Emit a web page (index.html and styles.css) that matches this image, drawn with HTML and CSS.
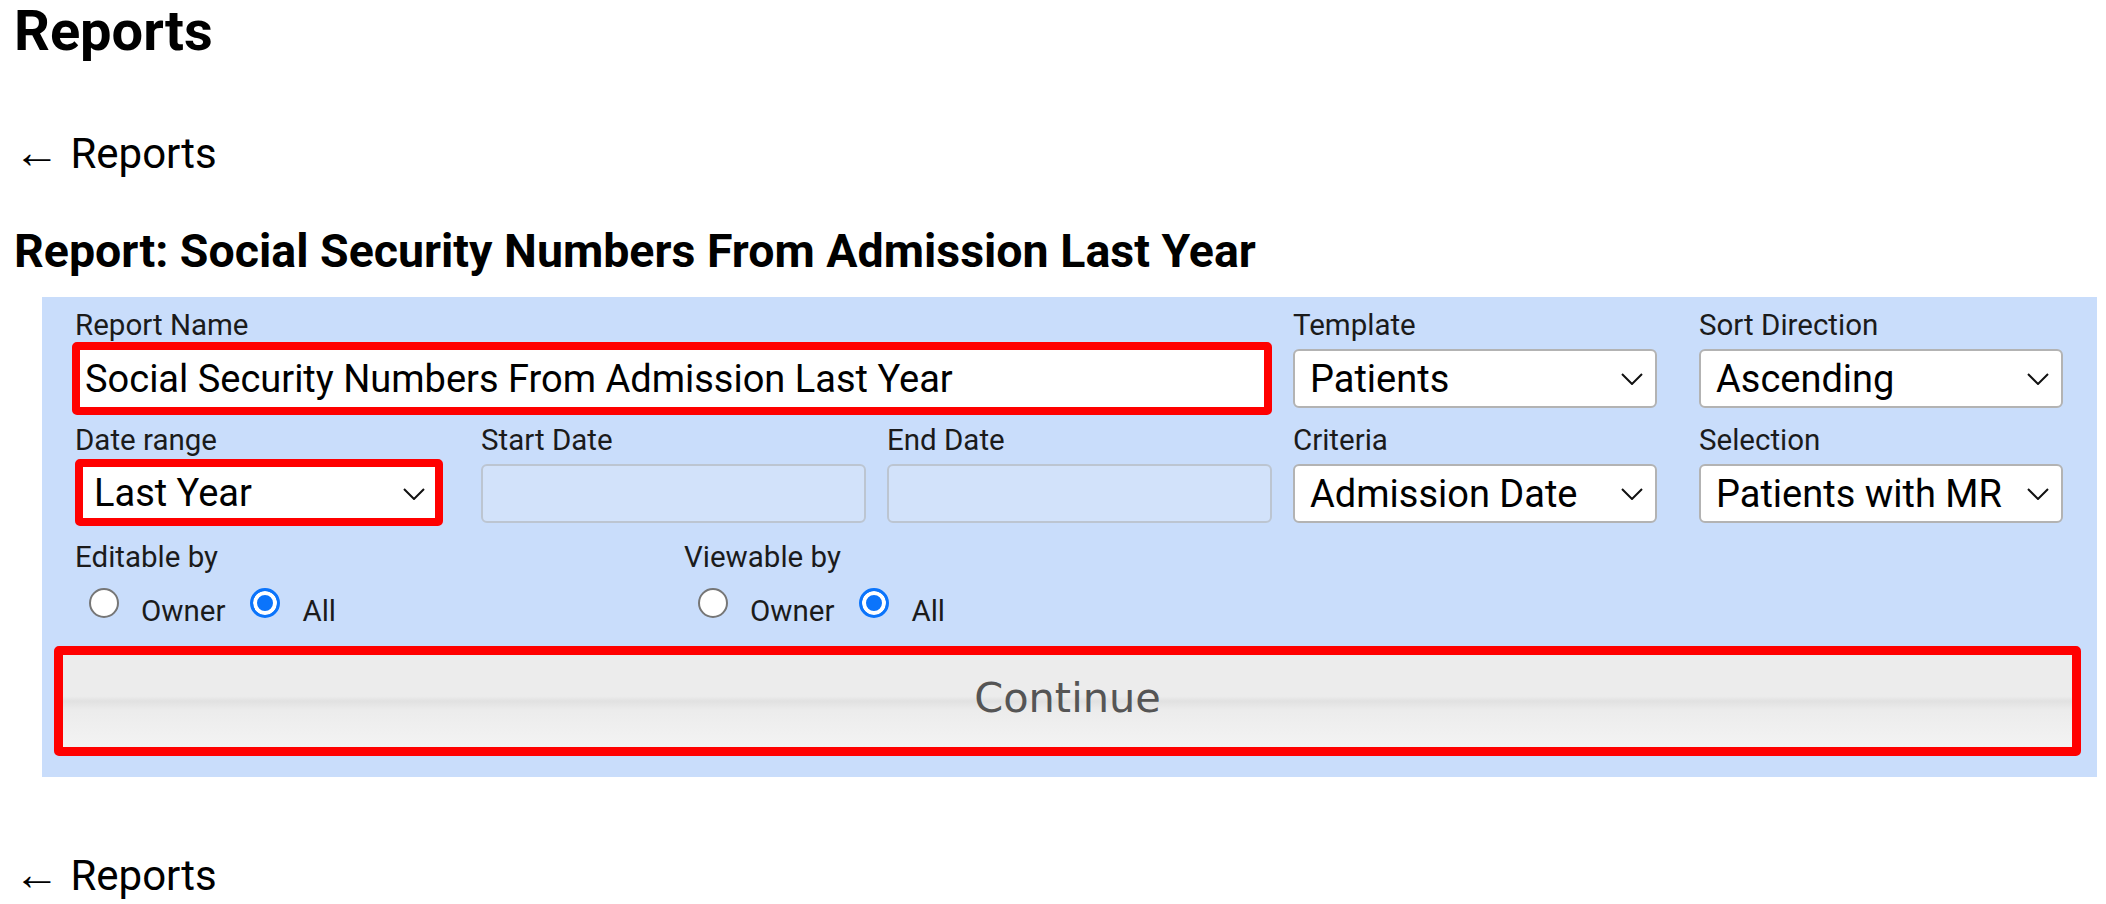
FILE: index.html
```html
<!DOCTYPE html>
<html lang="en">
<head>
<meta charset="utf-8">
<title>Reports</title>
<link rel="stylesheet" href="styles.css">
</head>
<body>
<h1 class="page-title">Reports</h1>
<a class="back-link" href="#"><span class="arrow">←</span> Reports</a>
<h2 class="report-title">Report: Social Security Numbers From Admission Last Year</h2>
<form class="panel">
  <div class="fields">
    <div class="field span3">
      <label class="field-label">Report Name</label>
      <input class="text-input highlight-input" type="text" value="Social Security Numbers From Admission Last Year">
    </div>
    <div class="field">
      <label class="field-label">Template</label>
      <div class="select-wrap narrow">
        <select class="select"><option>Patients</option></select>
        <svg class="chevron" viewBox="0 0 22 12" width="22" height="12"><polyline points="1,1 11,11 21,1" fill="none" stroke="#111" stroke-width="2"/></svg>
      </div>
    </div>
    <div class="field">
      <label class="field-label">Sort Direction</label>
      <div class="select-wrap narrow">
        <select class="select"><option>Ascending</option></select>
        <svg class="chevron" viewBox="0 0 22 12" width="22" height="12"><polyline points="1,1 11,11 21,1" fill="none" stroke="#111" stroke-width="2"/></svg>
      </div>
    </div>

    <div class="field">
      <label class="field-label">Date range</label>
      <div class="select-wrap date-range">
        <select class="select highlight-select"><option>Last Year</option></select>
        <svg class="chevron" viewBox="0 0 22 12" width="22" height="12"><polyline points="1,1 11,11 21,1" fill="none" stroke="#111" stroke-width="2"/></svg>
      </div>
    </div>
    <div class="field">
      <label class="field-label">Start Date</label>
      <input class="text-input disabled-input" type="text" disabled>
    </div>
    <div class="field">
      <label class="field-label">End Date</label>
      <input class="text-input disabled-input" type="text" disabled>
    </div>
    <div class="field">
      <label class="field-label">Criteria</label>
      <div class="select-wrap narrow">
        <select class="select"><option>Admission Date</option></select>
        <svg class="chevron" viewBox="0 0 22 12" width="22" height="12"><polyline points="1,1 11,11 21,1" fill="none" stroke="#111" stroke-width="2"/></svg>
      </div>
    </div>
    <div class="field">
      <label class="field-label">Selection</label>
      <div class="select-wrap narrow">
        <select class="select"><option>Patients with MR</option></select>
        <svg class="chevron" viewBox="0 0 22 12" width="22" height="12"><polyline points="1,1 11,11 21,1" fill="none" stroke="#111" stroke-width="2"/></svg>
      </div>
    </div>
  </div>

  <div class="perms">
    <div class="perm">
      <div class="field-label">Editable by</div>
      <div class="radio-row">
        <label class="radio-opt"><input class="radio" type="radio" name="edit"><span>Owner</span></label>
        <label class="radio-opt"><input class="radio" type="radio" name="edit" checked><span>All</span></label>
      </div>
    </div>
    <div class="perm">
      <div class="field-label">Viewable by</div>
      <div class="radio-row">
        <label class="radio-opt"><input class="radio" type="radio" name="view"><span>Owner</span></label>
        <label class="radio-opt"><input class="radio" type="radio" name="view" checked><span>All</span></label>
      </div>
    </div>
  </div>

  <button class="continue-btn" type="button">Continue</button>
</form>
<a class="back-link bottom-link" href="#"><span class="arrow">←</span> Reports</a>
</body>
</html>
```

FILE: styles.css
```css
html, body {
  background: #fff;
}
body {
  margin: 0 9px 0 14px;
  font-family: Roboto, "Liberation Sans", sans-serif;
  color: #000;
}
.page-title {
  font-size: 56px;
  line-height: 62px;
  font-weight: 700;
  margin: 0;
}
.back-link {
  display: block;
  width: max-content;
  font-size: 42px;
  line-height: 48px;
  margin-top: 66px;
  color: #000;
  text-decoration: none;
}
.arrow {
  font-family: "Liberation Sans", sans-serif;
  font-size: 46px;
  line-height: 48px;
}
.report-title {
  font-size: 46.5px;
  line-height: 56px;
  font-weight: 700;
  margin: 45px 0 0;
}
.panel {
  margin: 18px 0 0 28px;
  background: #c9ddfb;
  padding: 12px 13px 21px 12px;
}
.fields {
  display: grid;
  grid-template-columns: repeat(5, 1fr);
  column-gap: 21px;
  row-gap: 16px;
  padding-left: 21px;
}
.field {
  display: flex;
  flex-direction: column;
  align-items: flex-start;
}
.span3 {
  grid-column: span 3;
}
.field-label {
  font-size: 29.5px;
  line-height: 32px;
  color: #1b1b1b;
  margin-bottom: 8px;
}
.text-input {
  box-sizing: border-box;
  width: 100%;
  height: 59px;
  font-family: Roboto, "Liberation Sans", sans-serif;
  font-size: 38px;
  color: #000;
  border-radius: 6px;
  outline: none;
}
.highlight-input {
  width: calc(100% + 3px);
  height: 73px;
  margin: -7px 0 -7px -3px;
  border: 8px solid #ff0000;
  border-radius: 5px;
  background: #fff;
  padding: 0 0 0 5px;
}
.disabled-input {
  border: 2px solid #bcc5d1;
  background: #d2e2fa;
}
.select-wrap {
  position: relative;
  width: 100%;
}
.select-wrap.narrow {
  width: calc(100% - 21px);
}
.select-wrap.date-range {
  width: 368px;
}
.select {
  appearance: none;
  -webkit-appearance: none;
  box-sizing: border-box;
  display: block;
  width: 100%;
  height: 59px;
  margin: 0;
  padding: 0 40px 0 15px;
  font-family: Roboto, "Liberation Sans", sans-serif;
  font-size: 38px;
  color: #000;
  background: #fff;
  border: 2px solid #b3b3b3;
  border-radius: 6px;
  outline: none;
}
.highlight-select {
  height: 67px;
  margin: -5px 0 -2px;
  border: 8px solid #ff0000;
  border-radius: 5px;
  padding-left: 11px;
}
.chevron {
  position: absolute;
  right: 14px;
  top: 50%;
  margin-top: -6px;
  pointer-events: none;
}
.date-range .chevron {
  right: 18px;
}
.perms {
  display: grid;
  grid-template-columns: 609px 1fr;
  padding-left: 21px;
  margin-top: 17px;
}
.perm .field-label {
  margin-bottom: 0;
}
.radio-row {
  display: flex;
  align-items: flex-start;
  margin-top: 15px;
  padding-left: 14px;
  gap: 25px;
}
.radio-opt {
  display: flex;
  align-items: flex-start;
  gap: 22px;
  font-size: 29.5px;
  line-height: 40px;
  color: #1b1b1b;
}
.radio-opt span {
  margin-top: 3px;
}
.radio {
  appearance: none;
  -webkit-appearance: none;
  box-sizing: border-box;
  width: 30px;
  height: 30px;
  margin: 0;
  border: 2px solid #767676;
  border-radius: 50%;
  background: #fff;
}
.radio:checked {
  border: 3px solid #0b74fb;
  background: #0b74fb;
  box-shadow: inset 0 0 0 4px #fff;
}
.continue-btn {
  display: block;
  box-sizing: border-box;
  width: calc(100% - 3px);
  height: 110px;
  margin: 15px 3px 0 0;
  border: 9px solid #ff0000;
  border-radius: 5px;
  background: linear-gradient(#ececec 0%, #ececec 45%, #e1e1e1 50%, #ececec 60%, #f3f3f3 100%);
  font-family: "DejaVu Sans", sans-serif;
  font-size: 41.5px;
  color: #555;
  padding: 0 0 8px;
}
.bottom-link {
  margin-top: 73px;
}
```
